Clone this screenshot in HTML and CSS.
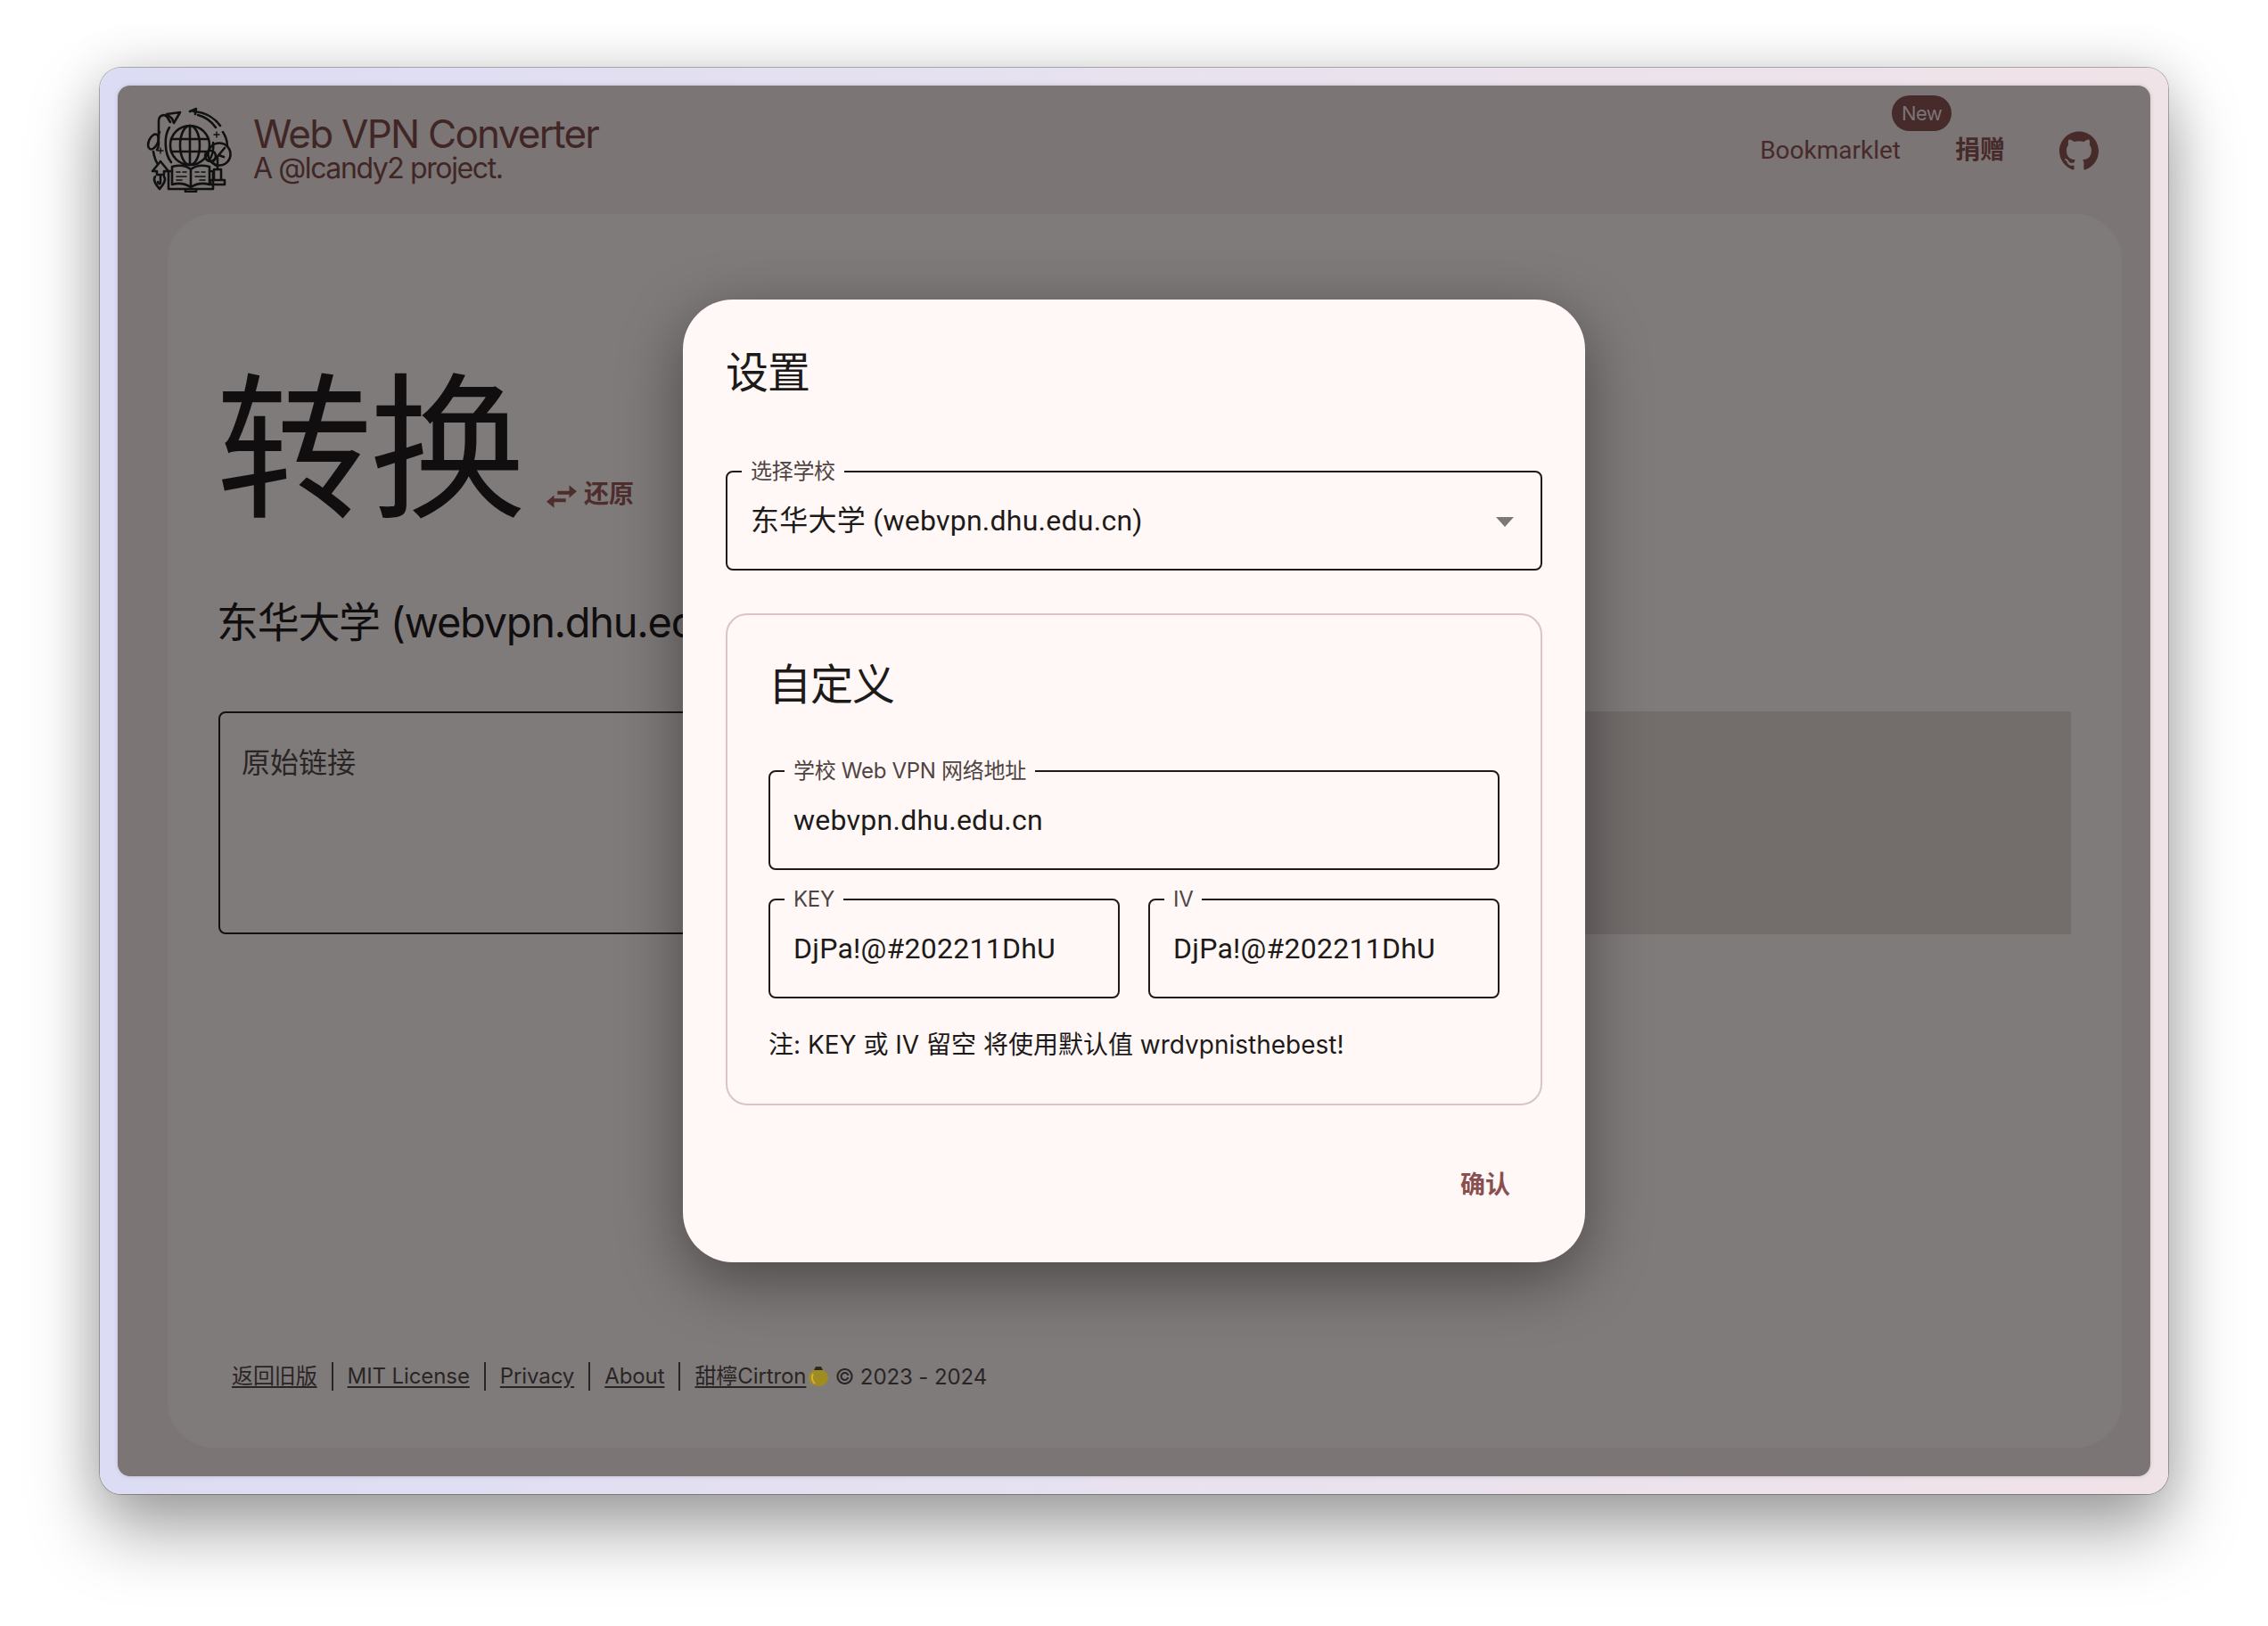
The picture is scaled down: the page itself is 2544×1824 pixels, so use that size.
FILE: index.html
```html
<!DOCTYPE html>
<html lang="zh-CN">
<head>
<meta charset="utf-8">
<title>Web VPN Converter</title>
<link rel="stylesheet" href="styles.css">
</head>
<body>
<div class="frame">
  <div class="app">
    <header class="topbar">
      <svg class="logo" viewBox="14 10 96 96" fill="none" stroke="#111" stroke-width="2.6" stroke-linecap="round" stroke-linejoin="round">
        <circle cx="63" cy="53" r="22"/>
        <ellipse cx="63" cy="53" rx="11" ry="22"/>
        <path d="M63 31V74M42 46H84M42 60H84"/>
        <path d="M40 33C34 42 34 62 42 72M84 70C88 66 90 58 89 50"/>
        <path d="M28 45V26C28 19 35 17 38 22L41 27"/>
        <path d="M37 18L52 16L45 28L43 23Z"/>
        <ellipse cx="22" cy="49" rx="5" ry="9" transform="rotate(25 22 49)"/>
        <path d="M29 38C25 44 31 52 26 58M22 60C23 66 24 70 27 74"/>
        <path d="M63 15L70 12L69 18M67 15C82 16 92 24 97 31M72 19C80 21 87 26 92 33M100 38C104 44 105 48 105 54"/>
        <path d="M21 82L30 71L39 82H34V86H26V82Z"/>
        <path d="M24 88C21 92 25 97 29 102C33 97 37 92 34 88M30 87V95C30 97 27 96 27 94"/>
        <path d="M64 80C58 75 50 75 43 77V97C50 95 58 96 64 100C70 96 78 95 85 97V77C78 75 70 75 64 80ZM64 80V100"/>
        <path d="M43 82H39V102H89V82H85M58 102V105H70V102"/>
        <path d="M48 83H52M55 83H59M48 88H59M48 92H54M69 83H73M76 83H80M69 88H80M74 92H80" stroke-width="1.6"/>
        <circle cx="96" cy="63" r="12.5"/>
        <circle cx="86" cy="65" r="6"/>
        <path d="M90 70L102 56M95 64L101 66M94 67V80M88 71C90 74 92 76 94 76"/>
        <path d="M90 80H98V92H90ZM86 92H102V97H86Z"/>
        <path d="M93 38V44M90 41H96M30 56V62M27 59H33" stroke-width="1.4"/>
      </svg>
      <div class="brand">
        <div class="brand-title">Web VPN Converter</div>
        <div class="brand-sub">A @lcandy2 project.</div>
      </div>
      <nav class="nav">
        <a class="nav-link bookmarklet">Bookmarklet<span class="badge">New</span></a>
        <a class="nav-link nav-strong">捐赠</a>
        <svg class="github" viewBox="0 0 24 24"><path d="M12 .297c-6.63 0-12 5.373-12 12 0 5.303 3.438 9.8 8.205 11.385.6.113.82-.258.82-.577 0-.285-.01-1.04-.015-2.04-3.338.724-4.042-1.61-4.042-1.61C4.422 18.07 3.633 17.7 3.633 17.7c-1.087-.744.084-.729.084-.729 1.205.084 1.838 1.236 1.838 1.236 1.07 1.835 2.809 1.305 3.495.998.108-.776.417-1.305.76-1.605-2.665-.3-5.466-1.332-5.466-5.93 0-1.31.465-2.38 1.235-3.22-.135-.303-.54-1.523.105-3.176 0 0 1.005-.322 3.3 1.23.96-.267 1.98-.399 3-.405 1.02.006 2.04.138 3 .405 2.28-1.552 3.285-1.23 3.285-1.23.645 1.653.24 2.873.12 3.176.765.84 1.23 1.91 1.23 3.22 0 4.61-2.805 5.625-5.475 5.92.42.36.81 1.096.81 2.22 0 1.606-.015 2.896-.015 3.286 0 .315.21.69.825.57C20.565 22.092 24 17.592 24 12.297c0-6.627-5.373-12-12-12"/></svg>
      </nav>
    </header>

    <main class="card">
      <div class="heading-row">
        <h1 class="heading">转换</h1>
        <a class="restore">
          <svg class="swap" viewBox="0 0 36 27"><path d="M13 7H27V0L36 7.5L27 15V11H13Z M23 16V20H9V27L0 19.5L9 12V16Z"/></svg>
          还原
        </a>
      </div>
      <h2 class="school">东华大学 (webvpn.dhu.edu.cn)</h2>
      <div class="io">
        <div class="io-input">原始链接</div>
        <div class="io-output"></div>
      </div>
      <footer class="footer">
        <a class="foot-link">返回旧版</a><i class="sep"></i>
        <a class="foot-link">MIT License</a><i class="sep"></i>
        <a class="foot-link">Privacy</a><i class="sep"></i>
        <a class="foot-link">About</a><i class="sep"></i>
        <a class="foot-link">甜檸Cirtron<svg class="lemon" viewBox="0 0 24 22"><path d="M12 3C18 3 23 7 23 13C23 18 18 22 12 22C6 22 1 18 1 13C1 7 6 3 12 3Z" fill="#a08a22"/><path d="M9 0H15L17 4H7Z" fill="#2c2a1c"/><path d="M6 8C4 12 5 16 8 19" stroke="#c9b23e" stroke-width="2" fill="none"/></svg></a>
        <span class="copy">© 2023 - 2024</span>
      </footer>
    </main>

    <section class="dialog">
      <h3 class="dialog-title">设置</h3>
      <div class="field field-select">
        <span class="field-label">选择学校</span>
        <span class="field-value">东华大学 (webvpn.dhu.edu.cn)</span>
        <i class="caret"></i>
      </div>
      <div class="custom">
        <h4 class="custom-title">自定义</h4>
        <div class="field">
          <span class="field-label">学校 Web VPN 网络地址</span>
          <span class="field-value">webvpn.dhu.edu.cn</span>
        </div>
        <div class="pair">
          <div class="field">
            <span class="field-label">KEY</span>
            <span class="field-value">DjPa!@#202211DhU</span>
          </div>
          <div class="field">
            <span class="field-label">IV</span>
            <span class="field-value">DjPa!@#202211DhU</span>
          </div>
        </div>
        <p class="note">注: KEY 或 IV 留空 将使用默认值 wrdvpnisthebest!</p>
      </div>
      <div class="actions"><button class="confirm">确认</button></div>
    </section>
  </div>
</div>
</body>
</html>
```
FILE: styles.css
```css
* { box-sizing: border-box; }
html, body { margin: 0; height: 100%; }
body {
  background: #fff;
  padding: 76px 112px 148px;
  font-family: Inter, "Noto Sans CJK SC", sans-serif;
  overflow: hidden;
}
a { color: inherit; }
h1, h2, h3, h4, p { margin: 0; font-weight: 400; }

.frame {
  height: 1600px;
  padding: 20px;
  border-radius: 24px;
  background: linear-gradient(90deg, #dcdcf4 0%, #e8e2ef 50%, #f0e3e8 100%);
  box-shadow: 0 0 0 1px rgba(0,0,0,.28), 0 40px 80px rgba(0,0,0,.36), 0 0 60px rgba(0,0,0,.12);
}
.app {
  position: relative;
  height: 100%;
  border-radius: 14px;
  overflow: hidden;
  background: #7b7575;
  display: flex;
  flex-direction: column;
  padding: 0 32px 32px 56px;
  box-shadow: 0 0 5px rgba(0,0,0,.15);
}

/* top bar */
.topbar {
  height: 144px;
  flex: none;
  display: flex;
  align-items: center;
  margin-left: -24px;
}
.logo { width: 96px; height: 96px; flex: none; }
.brand { margin: 0 0 0 24px; color: #412626; }
.brand-title { font-size: 44px; line-height: 42px; letter-spacing: -1.75px; }
.brand-sub { font-size: 32px; line-height: 36px; letter-spacing: -1.4px; }
.nav {
  margin-left: auto;
  display: flex;
  align-items: center;
  color: #472a2a;
  padding: 2px 26px 0 0;
}
.nav-link { font-family: Roboto, "Noto Sans CJK SC", sans-serif; font-size: 28px; line-height: 40px; }
.bookmarklet { position: relative; }
.nav-strong { font-weight: 700; margin-left: 61px; margin-right: 61px; }
.badge {
  position: absolute;
  left: 148px;
  top: -42px;
  width: 67px;
  height: 40px;
  border-radius: 20px;
  background: #472a2a;
  color: #7b7575;
  font: 22px/40px Inter, sans-serif;
  letter-spacing: -.6px;
  text-align: center;
}
.github { width: 44px; height: 44px; fill: #472a2a; flex: none; }

/* card */
.card {
  flex: 1;
  min-height: 0;
  border-radius: 52px;
  background: #807b7b;
  padding: 163px 57px 64px;
  display: flex;
  flex-direction: column;
  color: #100e0e;
}
.heading-row { display: flex; align-items: flex-end; }
.heading { font-size: 176px; line-height: 200px; letter-spacing: -4px; margin-left: -3px; }
.restore {
  display: flex;
  align-items: center;
  gap: 8px;
  margin: 0 0 31px 27px;
  color: #4e2d2d;
  font-weight: 700;
  font-size: 28px;
  line-height: 36px;
}
.swap { width: 34px; height: 26px; fill: #4e2d2d; margin-top: 6px; }
.school { margin: 63px 0 0 -2px; font-size: 47px; line-height: 64px; letter-spacing: -1.3px; white-space: nowrap; }
.io { margin-top: 68px; display: grid; grid-template-columns: 1fr 1fr; gap: 32px; height: 250px; }
.io-input {
  border: 2px solid #111;
  border-radius: 8px;
  padding: 32px 24px;
  font-size: 32px;
  line-height: 48px;
  color: #2a2525;
}
.io-output { background: #736d6c; }

.footer {
  margin-top: auto;
  margin-left: 15px;
  display: flex;
  align-items: center;
  height: 32px;
  font-size: 24px;
  letter-spacing: -.1px;
  color: #2a2525;
}
.foot-link { display: block; line-height: 32px; text-decoration: underline; text-underline-offset: 3px; white-space: nowrap; }
.sep { width: 2px; height: 32px; background: #2a2525; margin: 0 16px; flex: none; }
.lemon { width: 24px; height: 22px; vertical-align: -3px; margin-left: 2px; }
.copy { margin-left: 6px; }

/* dialog */
.dialog {
  position: absolute;
  left: 634px;
  top: 240px;
  width: 1012px;
  height: 1080px;
  padding: 48px;
  border-radius: 56px;
  background: #fff8f6;
  color: #1d1a1a;
  display: flex;
  flex-direction: column;
  box-shadow: 0 20px 70px rgba(0,0,0,.42);
}
.dialog-title { font-size: 48px; line-height: 64px; letter-spacing: -1px; margin-top: 2px; }
.field {
  position: relative;
  height: 112px;
  border: 2px solid #1d1a1a;
  border-radius: 8px;
  display: flex;
  align-items: center;
  padding: 0 26px;
}
.field-select { margin-top: 78px; }
.field-label {
  position: absolute;
  left: 16px;
  top: -15px;
  padding: 0 10px;
  background: #fff8f6;
  font-size: 24px;
  line-height: 28px;
  letter-spacing: -.3px;
  color: #4f4444;
  white-space: nowrap;
}
.field-value { font-family: Roboto, "Noto Sans CJK SC", sans-serif; font-size: 32px; line-height: 40px; letter-spacing: .25px; white-space: nowrap; }
.caret {
  position: absolute;
  right: 30px;
  top: 50%;
  border: 10px solid transparent;
  border-top: 11px solid #7d7878;
  border-bottom: 0;
  margin-top: -4px;
}
.custom {
  margin-top: 48px;
  height: 552px;
  border: 2px solid #d8c6c4;
  border-radius: 24px;
  padding: 46px;
}
.custom-title { font-size: 48px; line-height: 64px; letter-spacing: -1px; margin-bottom: 64px; }
.pair { display: grid; grid-template-columns: 1fr 1fr; gap: 32px; margin-top: 32px; }
.note { margin-top: 32px; font-size: 28px; line-height: 40px; }
.actions { margin: auto 0 18px; display: flex; justify-content: flex-end; }
.confirm {
  border: 0;
  background: none;
  padding: 0 36px 0 0;
  height: 40px;
  color: #8a4f50;
  font: 700 28px/40px Roboto, "Noto Sans CJK SC", sans-serif;
}
```
